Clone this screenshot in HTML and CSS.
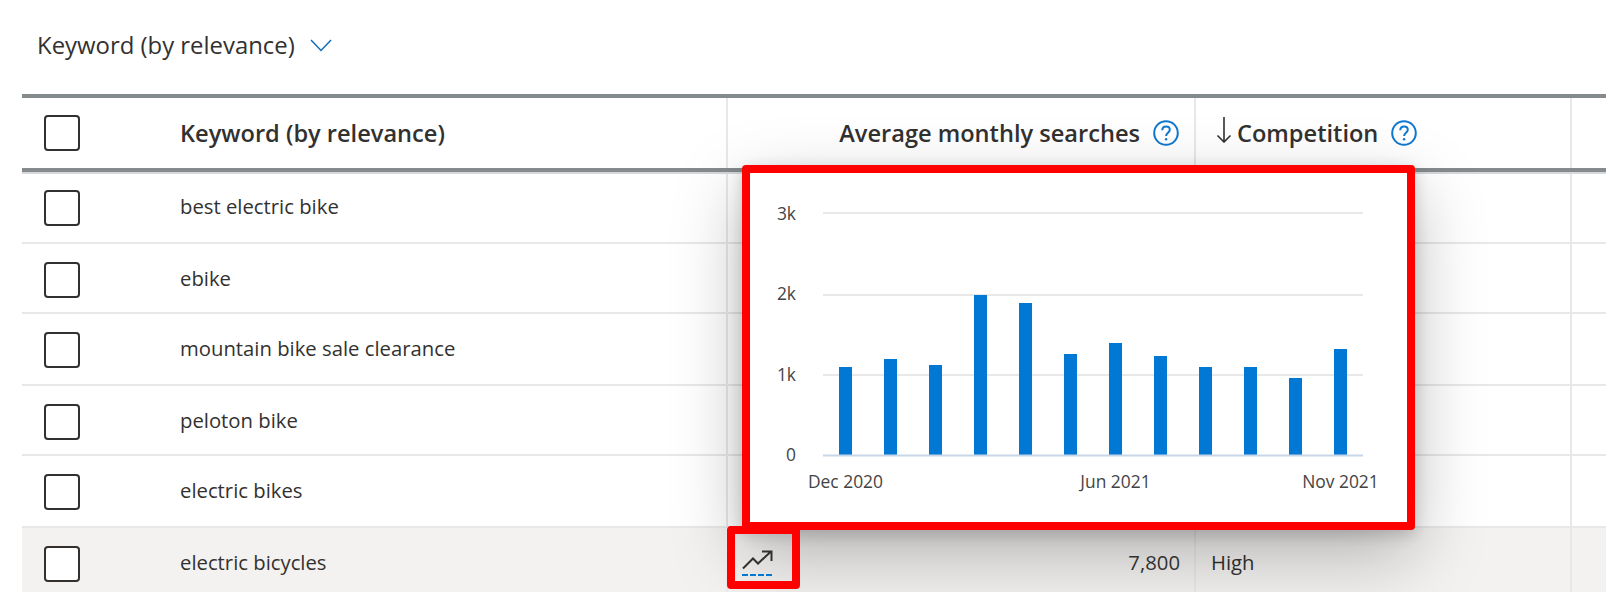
FILE: index.html
```html
<!DOCTYPE html>
<html lang="en">
<head>
<meta charset="utf-8">
<title>Keyword ideas</title>
<link rel="stylesheet" href="styles.css">
</head>
<body>
<main class="page">
  <div class="toolbar">
    <span class="toolbar-label">Keyword (by relevance)</span>
    <svg class="chevron" viewBox="0 0 22 13"><path d="M1 1l10 10.5L21 1"/></svg>
  </div>

  <div class="table">
    <div class="row head">
      <div class="cell kw"><span class="check"></span><span class="kw-text">Keyword (by relevance)</span></div>
      <div class="cell num">
        <span>Average monthly searches</span>
        <svg class="help" viewBox="0 0 26 26"><circle cx="13" cy="13" r="11.8"/><path d="M9.3 10.2c0-2.3 1.6-3.8 3.8-3.8s3.7 1.4 3.7 3.4c0 3-3.7 3-3.7 6.2"/><circle class="dot" cx="13.1" cy="19.3" r="1.2"/></svg>
      </div>
      <div class="cell txt">
        <svg class="sort" viewBox="0 0 16 26"><path d="M8 0v25M1.5 18.5L8 25l6.5-6.5"/></svg>
        <span>Competition</span>
        <svg class="help" viewBox="0 0 26 26"><circle cx="13" cy="13" r="11.8"/><path d="M9.3 10.2c0-2.3 1.6-3.8 3.8-3.8s3.7 1.4 3.7 3.4c0 3-3.7 3-3.7 6.2"/><circle class="dot" cx="13.1" cy="19.3" r="1.2"/></svg>
      </div>
      <div class="cell"></div>
    </div>

    <div class="row first"><div class="cell kw"><span class="check"></span><span class="kw-text">best electric bike</span></div><div class="cell"></div><div class="cell"></div><div class="cell"></div></div>
    <div class="row"><div class="cell kw"><span class="check"></span><span class="kw-text">ebike</span></div><div class="cell"></div><div class="cell"></div><div class="cell"></div></div>
    <div class="row tall"><div class="cell kw"><span class="check"></span><span class="kw-text">mountain bike sale clearance</span></div><div class="cell"></div><div class="cell"></div><div class="cell"></div></div>
    <div class="row"><div class="cell kw"><span class="check"></span><span class="kw-text">peloton bike</span></div><div class="cell"></div><div class="cell"></div><div class="cell"></div></div>
    <div class="row tall"><div class="cell kw"><span class="check"></span><span class="kw-text">electric bikes</span></div><div class="cell"></div><div class="cell"></div><div class="cell"></div></div>
    <div class="row hovered">
      <div class="cell kw"><span class="check"></span><span class="kw-text">electric bicycles</span></div>
      <div class="cell num-value">
        <span class="trend">
          <svg class="trend-icon" viewBox="0 0 57 47"><path class="trend-line" d="M8 34.500L18 24.500L23 29.500L36 17.500M27 17.500H36.500V27"/><path class="trend-dash" d="M7 41H37"/></svg>
        </span>
        <span class="value">7,800</span>
      </div>
      <div class="cell txt-value">High</div>
      <div class="cell"></div>
    </div>
  </div>

  <aside class="popup">
    <svg class="chart" viewBox="750 173 657 347">
      <g class="grid">
        <path d="M823 213H1363M823 295H1363M823 375H1363"/>
      </g>
      <g class="bars">
        <rect x="839" y="367" width="13" height="88"/>
        <rect x="884" y="359" width="13" height="96"/>
        <rect x="929" y="365" width="13" height="90"/>
        <rect x="974" y="295" width="13" height="160"/>
        <rect x="1019" y="303" width="13" height="152"/>
        <rect x="1064" y="354" width="13" height="101"/>
        <rect x="1109" y="343" width="13" height="112"/>
        <rect x="1154" y="356" width="13" height="99"/>
        <rect x="1199" y="367" width="13" height="88"/>
        <rect x="1244" y="367" width="13" height="88"/>
        <rect x="1289" y="378" width="13" height="77"/>
        <rect x="1334" y="349" width="13" height="106"/>
      </g>
      <path class="axis" d="M823 455.500H1363"/>
      <g class="labels">
        <text class="y" x="796" y="220">3k</text>
        <text class="y" x="796" y="300">2k</text>
        <text class="y" x="796" y="381">1k</text>
        <text class="y" x="796" y="461">0</text>
        <text class="x" x="845.500" y="488">Dec 2020</text>
        <text class="x" x="1115.500" y="488">Jun 2021</text>
        <text class="x" x="1340.500" y="488">Nov 2021</text>
      </g>
    </svg>
  </aside>
</main>
</body>
</html>
```

FILE: styles.css
```css
* { box-sizing: border-box; }

html, body {
  margin: 0;
  height: 592px;
  overflow: hidden;
  background: #fff;
}

.page {
  position: relative;
  height: 592px;
  overflow: hidden;
  font-family: "Open Sans", "Noto Sans", sans-serif;
  font-size: 20.3px;
  color: #323130;
}

.toolbar {
  height: 94px;
  padding: 0 0 6px 37px;
  display: flex;
  align-items: center;
  font-size: 23.9px;
}

.chevron {
  width: 22px;
  height: 13px;
  margin-left: 15px;
  margin-top: 2px;
  fill: none;
  stroke: #0f6cbd;
  stroke-width: 1.5;
}

.table {
  margin-left: 22px;
  display: grid;
  grid-template-rows: 78px 70px 70px 72px 70px 72px 1fr;
  height: 498px;
}

.row {
  display: grid;
  grid-template-columns: 704px 468px 376px 1fr;
  border-top: 2px solid #e8e8e8;
}

.cell {
  border-left: 2px solid #e8e8e8;
  min-width: 0;
}

.kw {
  border-left: 0;
  display: flex;
  align-items: flex-start;
  padding: 18px 0 0 22px;
}

.check {
  flex: none;
  width: 36px;
  height: 36px;
  background: #fff;
  border: 2px solid #323130;
  border-radius: 4px;
}

.kw-text {
  margin-left: 100px;
  line-height: 32px;
}

.head {
  border-top: 4px solid #858a8d;
  border-bottom: 4px solid #858a8d;
  font-weight: 600;
  font-size: 23.6px;
}

.head .cell {
  display: flex;
  align-items: center;
  padding-top: 0;
}

.head .kw .check { margin: 0; }
.head .kw-text { line-height: 70px; }

.num {
  justify-content: flex-end;
  padding-right: 15px;
  gap: 13px;
}

.txt {
  padding-left: 20px;
  gap: 13px;
}

.help {
  flex: none;
  width: 26px;
  height: 26px;
  fill: none;
  stroke: #0f78d0;
  stroke-width: 2;
}

.help .dot {
  fill: #0f78d0;
  stroke: none;
}

.sort {
  flex: none;
  width: 16px;
  height: 26px;
  margin-right: -8px;
  margin-bottom: 7px;
  fill: none;
  stroke: #323130;
  stroke-width: 1.6;
}

.first {
  border-top-color: #d6d9dc;
}

.first .kw { padding-top: 16px; }

.hovered {
  background: #f3f2f1;
}

.num-value {
  position: relative;
  z-index: 2;
  display: flex;
  justify-content: flex-end;
  padding-right: 14px;
}

.value { line-height: 68px; }

.trend {
  position: absolute;
  left: -1px;
  top: -2px;
  width: 73px;
  height: 63px;
  border: 8px solid #f00;
  border-radius: 4px;
}

.trend-icon {
  display: block;
  width: 57px;
  height: 47px;
  fill: none;
}

.trend-line {
  stroke: #323130;
  stroke-width: 2;
}

.trend-dash {
  stroke: #0078d4;
  stroke-width: 2;
  stroke-dasharray: 6 2;
}

.txt-value {
  padding-left: 15px;
  line-height: 68px;
}

.popup {
  position: absolute;
  z-index: 1;
  left: 742px;
  top: 165px;
  width: 673px;
  height: 365px;
  background: #fff;
  border: 8px solid #f00;
  border-radius: 4px;
  box-shadow: 0 25.6px 70px rgba(0, 0, 0, .26), 0 4.8px 14.4px rgba(0, 0, 0, .16);
}

.chart {
  display: block;
  width: 657px;
  height: 347px;
}

.grid path {
  fill: none;
  stroke: #e8e8e8;
  stroke-width: 2;
}

.bars rect { fill: #0078d4; }

.axis {
  fill: none;
  stroke: #c8d6e8;
  stroke-width: 2;
}

.labels text {
  font-family: "Open Sans", "Noto Sans", sans-serif;
  font-size: 17.4px;
  fill: #444;
}

.labels .y { text-anchor: end; }
.labels .x { text-anchor: middle; }
```
